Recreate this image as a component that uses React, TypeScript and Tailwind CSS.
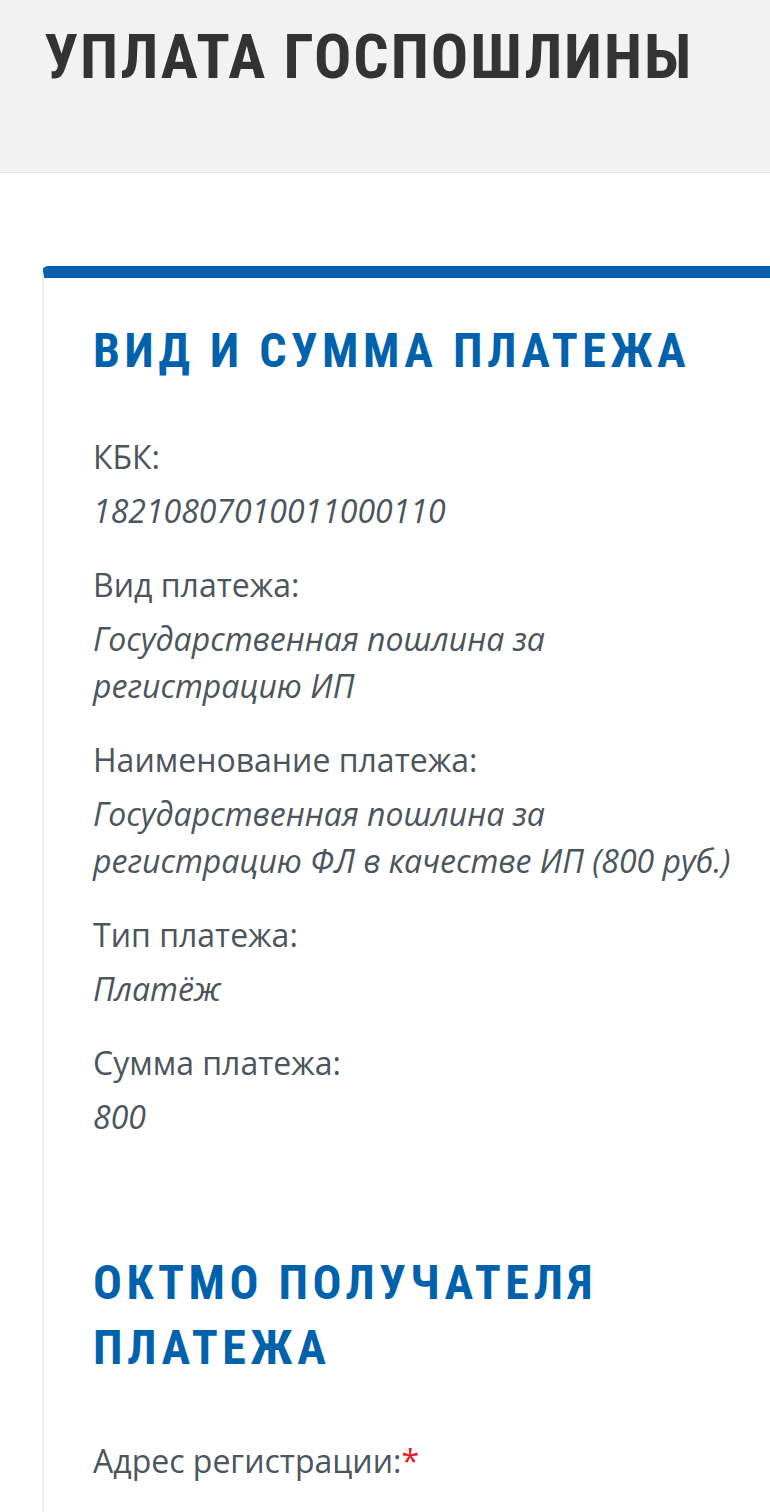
const fields: { label: string; value: string }[] = [
  { label: "КБК:", value: "18210807010011000110" },
  { label: "Вид платежа:", value: "Государственная пошлина за регистрацию ИП" },
  {
    label: "Наименование платежа:",
    value: "Государственная пошлина за регистрацию ФЛ в качестве ИП (800 руб.)",
  },
  { label: "Тип платежа:", value: "Платёж" },
  { label: "Сумма платежа:", value: "800" },
];

export default function App() {
  return (
    <div className="min-h-[1512px] bg-white font-['Open_Sans',sans-serif] overflow-hidden">
      <header className="h-[173px] border-b border-[#e2e2e2] bg-[#f2f2f2] pl-[44px] pt-[19px]">
        <h1 className="font-['Roboto',sans-serif] [font-stretch:75%] text-[62px] font-bold leading-[76px] tracking-[2px] text-[#333333] whitespace-nowrap">
          УПЛАТА ГОСПОШЛИНЫ
        </h1>
      </header>

      <main className="pt-[93px] pl-[42px]">
        <section className="rounded-tl-[6px] border-t-[12px] border-l-2 border-t-[#0062ad] border-l-[#eeeeee] pl-[49px] pr-[25px] pt-[40px] pb-[60px]">
          <h2 className="font-['Roboto',sans-serif] [font-stretch:75%] text-[48px] font-bold leading-[65px] tracking-[4.5px] text-[#0062ad] whitespace-nowrap">
            ВИД И СУММА ПЛАТЕЖА
          </h2>

          <div className="mt-[50px] flex flex-col gap-[27px] text-[32px] leading-[47px] text-[#4a555c]">
            {fields.map((f) => (
              <div key={f.label}>
                <div className="mb-[7px]">{f.label}</div>
                <div className="italic">{f.value}</div>
              </div>
            ))}
          </div>

          <h2 className="mt-[110px] max-w-[560px] font-['Roboto',sans-serif] [font-stretch:75%] text-[48px] font-bold leading-[65px] tracking-[4.5px] text-[#0062ad]">
            ОКТМО ПОЛУЧАТЕЛЯ ПЛАТЕЖА
          </h2>

          <div className="mt-[57px] text-[32px] leading-[47px] text-[#4a555c]">
            Адрес регистрации:<span className="text-[#e31b23]">*</span>
          </div>
        </section>
      </main>
    </div>
  );
}
